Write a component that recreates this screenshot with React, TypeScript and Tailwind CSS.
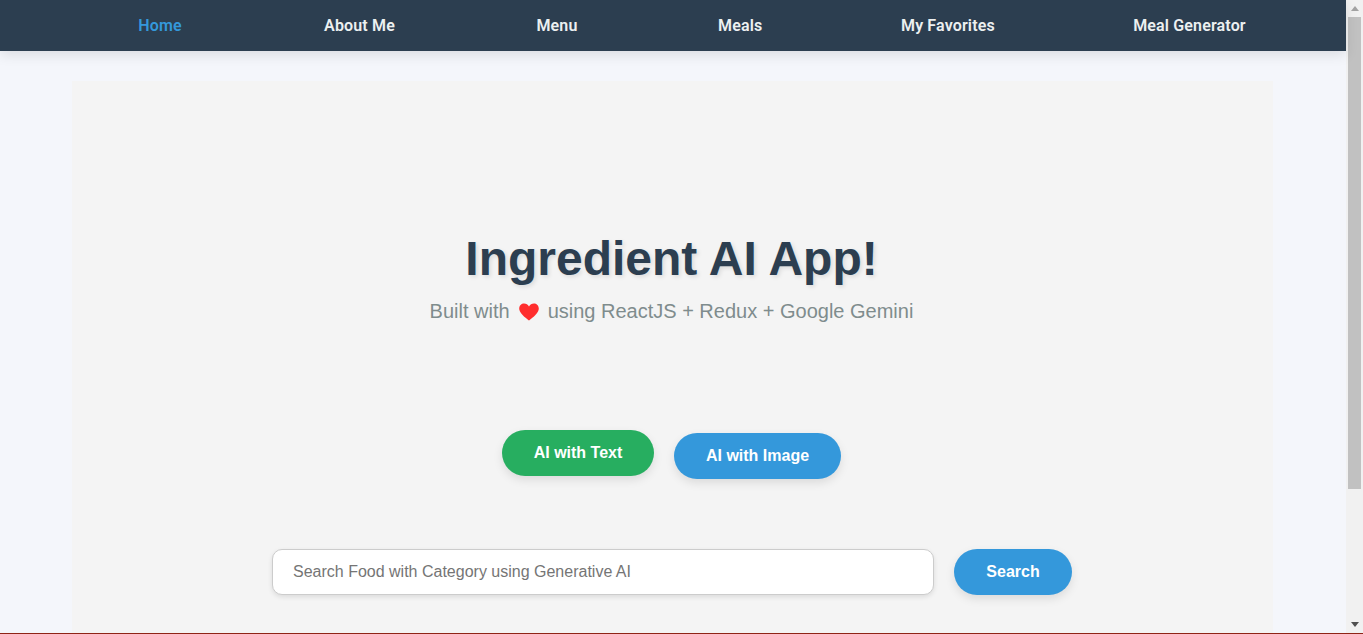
const navLinks = [
  { label: "Home", width: "w-[46px]" },
  { label: "About Me", width: "w-[73px]" },
  { label: "Menu", width: "w-[42px]" },
  { label: "Meals", width: "w-[43px]" },
  { label: "My Favorites", width: "w-[92px]" },
  { label: "Meal Generator", width: "w-[113px]" },
];

const Heart = () => (
  <svg viewBox="0 0 20 18" className="mx-[9px] h-[18px] w-[20px]" aria-hidden="true">
    <path
      d="M10 17.6C8.9 16.5 1 11.2 0.3 6.5 -0.3 2.9 2.2 0.4 5.1 0.4 7.2 0.4 9 1.5 10 3.4 11 1.5 12.8 0.4 14.9 0.4 17.8 0.4 20.3 2.9 19.7 6.5 19 11.2 11.1 16.5 10 17.6Z"
      fill="#ff2d2d"
    />
  </svg>
);

const ScrollArrow = ({ down }: { down?: boolean }) => (
  <svg viewBox="0 0 8 5" className="h-[5px] w-[8px]" aria-hidden="true">
    <path d={down ? "M0 0H8L4 5Z" : "M4 0L8 5H0Z"} fill={down ? "#505050" : "#a3a3a3"} />
  </svg>
);

export default function App() {
  return (
    <div className="flex h-screen overflow-hidden border-b border-[#8f2416] bg-[#f4f6fb] font-['Liberation_Sans',sans-serif]">
      <div className="min-w-0 flex-1">
        <nav className="relative z-10 flex h-[51px] items-center gap-[140px] bg-[#2c3e50] pt-px pl-[137px] font-['Roboto',sans-serif] text-[16px] font-semibold tracking-[0.15px] shadow-[0_4px_12px_rgba(0,0,0,0.1)]">
          {navLinks.map((link) => (
            <a
              key={link.label}
              href="#"
              className={`${link.width} whitespace-nowrap text-center ${
                link.label === "Home" ? "text-[#3498db]" : "text-[#ecf0f1]"
              }`}
            >
              {link.label}
            </a>
          ))}
        </nav>

        <main className="mx-[72px] mt-[30px] h-[600px] w-[1201px] bg-[#f4f4f4]">
          <div className="pt-[150px] pr-[2px] text-center">
            <h1 className="text-[48px] leading-[55px] font-bold text-[#2c3e50] [text-shadow:2px_2px_4px_rgba(0,0,0,0.1)]">
              Ingredient AI App!
            </h1>
            <p className="mt-[14px] flex items-center justify-center text-[20px] leading-[23px] text-[#7f8c8d]">
              Built with <Heart /> using ReactJS + Redux + Google Gemini
            </p>
          </div>

          <div className="mt-[107px] flex justify-center gap-5 pr-[2px]">
            <button className="h-[46px] w-[152px] rounded-[25px] bg-[#27ae60] text-[16px] font-bold text-white shadow-[0_4px_10px_rgba(0,0,0,0.1)]">
              AI with Text
            </button>
            <button className="mt-[3px] h-[46px] w-[167px] rounded-[25px] bg-[#3498db] text-[16px] font-bold text-white shadow-[0_4px_10px_rgba(0,0,0,0.1)]">
              AI with Image
            </button>
          </div>

          <form className="mt-[70px] ml-[200px] flex gap-5">
            <input
              placeholder="Search Food with Category using Generative AI"
              className="h-[46px] w-[662px] rounded-[10px] border border-[#cccccc] bg-white px-5 text-[16px] shadow-[0_2px_5px_rgba(0,0,0,0.1)] outline-none placeholder:text-[#757575]"
            />
            <button className="h-[46px] w-[118px] rounded-[25px] bg-[#3498db] text-[16px] font-bold text-white shadow-[0_4px_10px_rgba(0,0,0,0.1)]">
              Search
            </button>
          </form>
        </main>
      </div>

      <div className="flex w-[17px] shrink-0 flex-col items-center bg-[#f1f1f1]">
        <div className="flex h-[17px] items-center justify-center">
          <ScrollArrow />
        </div>
        <div className="h-[472px] w-[13px] bg-[#c1c1c1]" />
        <div className="mt-auto flex h-[17px] items-center justify-center">
          <ScrollArrow down />
        </div>
      </div>
    </div>
  );
}
